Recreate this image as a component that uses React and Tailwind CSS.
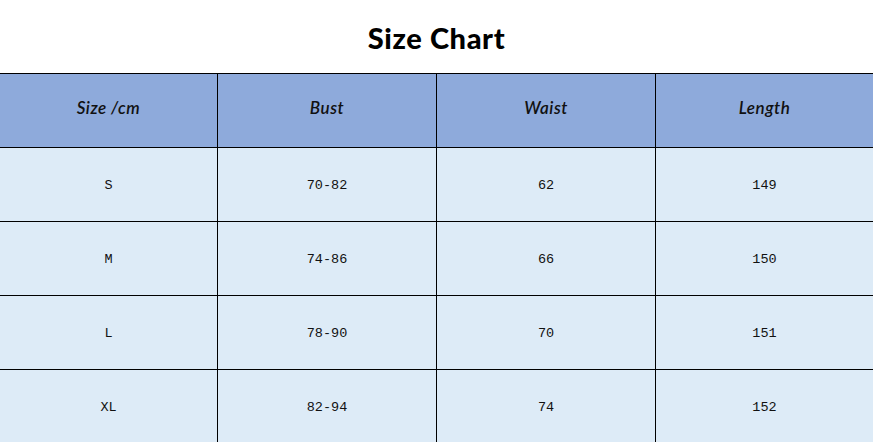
export default function App() {
  const head = ["Size /cm", "Bust", "Waist", "Length"];
  const rows = [
    ["S", "70-82", "62", "149"],
    ["M", "74-86", "66", "150"],
    ["L", "78-90", "70", "151"],
    ["XL", "82-94", "74", "152"],
  ];
  const cols = "grid grid-cols-[217px_219px_219px_1fr]";
  return (
    <div className="w-[873px] h-[442px] overflow-hidden bg-white">
      <div className="h-[73px] flex items-center justify-center pt-[2px]">
        <h1 className="font-['Lato',sans-serif] font-black text-[29px] text-black tracking-[0.6px]">Size Chart</h1>
      </div>
      <div className={`${cols} bg-[#8eaadb] border-t border-b border-black h-[75px]`}>
        {head.map((h, i) => (
          <div
            key={h}
            className={`flex items-center justify-center pb-[6px] font-['Comic_Sans_MS','Lato',cursive] italic font-semibold text-[17px] tracking-[0.5px] text-[#111] ${i > 0 ? "border-l border-black" : ""}`}
          >
            {h}
          </div>
        ))}
      </div>
      {rows.map((r) => (
        <div key={r[0]} className={`${cols} bg-[#ddebf7] border-b border-black h-[74px]`}>
          {r.map((c, i) => (
            <div
              key={i}
              className={`flex items-center justify-center pt-[3px] font-['Liberation_Mono',monospace] text-[13.5px] text-[#111] ${i > 0 ? "border-l border-black" : ""}`}
            >
              {c}
            </div>
          ))}
        </div>
      ))}
    </div>
  );
}
